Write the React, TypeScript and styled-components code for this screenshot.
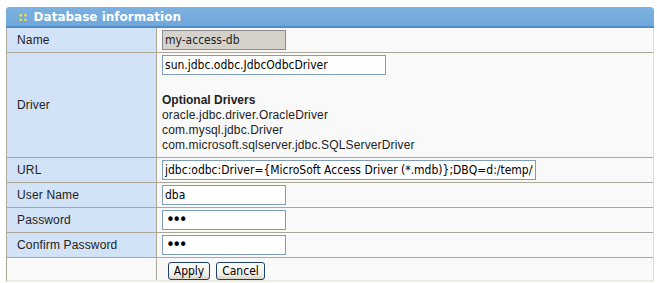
import React from "react";
import styled, { createGlobalStyle } from "styled-components";

const GlobalStyle = createGlobalStyle`
  html, body { margin: 0; padding: 0; background: #ffffff; }
  body { font-family: "Liberation Sans", Arial, sans-serif; font-size: 12px; color: #222; }
`;

const Page = styled.div`
  padding: 7px 3px 0 6px;
`;

const Panel = styled.div`
  width: 648px;
  box-sizing: border-box;
  border-left: 1px solid #aca899;
  border-right: 1px solid #e2dfcf;
  border-bottom: 2px solid #ecebdf;
  border-radius: 4px 4px 0 0;
  background: #f9f9f9;
`;

const Header = styled.div`
  height: 19px;
  margin-left: -1px;
  margin-right: -1px;
  display: flex;
  align-items: center;
  gap: 6px;
  padding-left: 12px;
  border-radius: 4px 4px 0 0;
  background: linear-gradient(#7cb1e0, #70a7da);
  border-bottom: 2px solid #4f8cca;
  font-family: "DejaVu Sans", Verdana, sans-serif;
  font-weight: bold;
  font-size: 12px;
  color: #ffffff;
`;

const Dots = styled.span`
  color: #efe23a;
  font-weight: bold;
  font-size: 12px;
`;

const Row = styled.div<{ $h?: number }>`
  display: grid;
  grid-template-columns: 150px 1fr;
  min-height: ${(p) => p.$h ?? 24}px;
  border-bottom: 1px solid #aca899;
  &:last-child { border-bottom: none; }
`;

const Label = styled.div<{ $plain?: boolean }>`
  display: flex;
  align-items: center;
  padding-left: 10px;
  background: ${(p) => (p.$plain ? "#f9f9f9" : "#d3e3f7")};
  border-right: 1px solid #aca899;
  font-size: 12px;
  letter-spacing: 0.15px;
  color: #222;
`;

const Field = styled.div<{ $top?: boolean }>`
  display: flex;
  flex-direction: column;
  justify-content: ${(p) => (p.$top ? "flex-start" : "center")};
  align-items: flex-start;
  padding: ${(p) => (p.$top ? "2px 5px 0" : "0 5px")};
`;

const Input = styled.input<{ $w: number }>`
  box-sizing: border-box;
  width: ${(p) => p.$w}px;
  height: 20px;
  margin: 0;
  padding: 0 2px;
  border: 1px solid #7f9db9;
  background: #ffffff;
  font-family: "DejaVu Sans Condensed", "Liberation Sans", sans-serif;
  font-size: 12px;
  color: #000;
  outline: none;
  &[type="password"] {
    font-family: "DejaVu Sans", sans-serif;
    font-size: 15px;
    letter-spacing: -2.5px;
    padding-left: 3px;
  }
  &:disabled {
    background: #d5d2cc;
    border-color: #8a8a8a;
    color: #222;
  }
`;

const Drivers = styled.div`
  margin-top: 18px;
  line-height: 15px;
  font-size: 12px;
  letter-spacing: 0.15px;
  color: #222;
`;

const DriversTitle = styled.div`
  font-weight: bold;
  letter-spacing: 0;
`;

const Buttons = styled.div`
  display: flex;
  gap: 6px;
  padding: 2px 0 0 6px;
`;

const Button = styled.button<{ $w: number }>`
  width: ${(p) => p.$w}px;
  height: 18px;
  padding: 0;
  border: 1px solid #1c3f6e;
  border-radius: 3px;
  background: linear-gradient(#ffffff, #f0efe8 70%, #d8d5c8);
  font-family: "DejaVu Sans Condensed", "Liberation Sans", sans-serif;
  font-size: 12px;
  color: #000;
  line-height: 14px;
`;

export default function App() {
  return (
    <>
      <GlobalStyle />
      <Page>
        <Panel>
          <Header>
            <Dots>::</Dots>
            <span>Database information</span>
          </Header>
          <Row>
            <Label>Name</Label>
            <Field>
              <Input $w={124} value="my-access-db" disabled readOnly />
            </Field>
          </Row>
          <Row $h={104}>
            <Label>Driver</Label>
            <Field $top>
              <Input $w={224} value="sun.jdbc.odbc.JdbcOdbcDriver" readOnly />
              <Drivers>
                <DriversTitle>Optional Drivers</DriversTitle>
                <div>oracle.jdbc.driver.OracleDriver</div>
                <div>com.mysql.jdbc.Driver</div>
                <div>com.microsoft.sqlserver.jdbc.SQLServerDriver</div>
              </Drivers>
            </Field>
          </Row>
          <Row>
            <Label>URL</Label>
            <Field>
              <Input
                $w={374}
                value="jdbc:odbc:Driver={MicroSoft Access Driver (*.mdb)};DBQ=d:/temp/test.mdb"
                readOnly
              />
            </Field>
          </Row>
          <Row>
            <Label>User Name</Label>
            <Field>
              <Input $w={124} value="dba" readOnly />
            </Field>
          </Row>
          <Row>
            <Label>Password</Label>
            <Field>
              <Input $w={124} type="password" value="sql" readOnly />
            </Field>
          </Row>
          <Row>
            <Label>Confirm Password</Label>
            <Field>
              <Input $w={124} type="password" value="sql" readOnly />
            </Field>
          </Row>
          <Row $h={22}>
            <Label $plain />
            <Field $top>
              <Buttons>
                <Button $w={42}>Apply</Button>
                <Button $w={49}>Cancel</Button>
              </Buttons>
            </Field>
          </Row>
        </Panel>
      </Page>
    </>
  );
}
